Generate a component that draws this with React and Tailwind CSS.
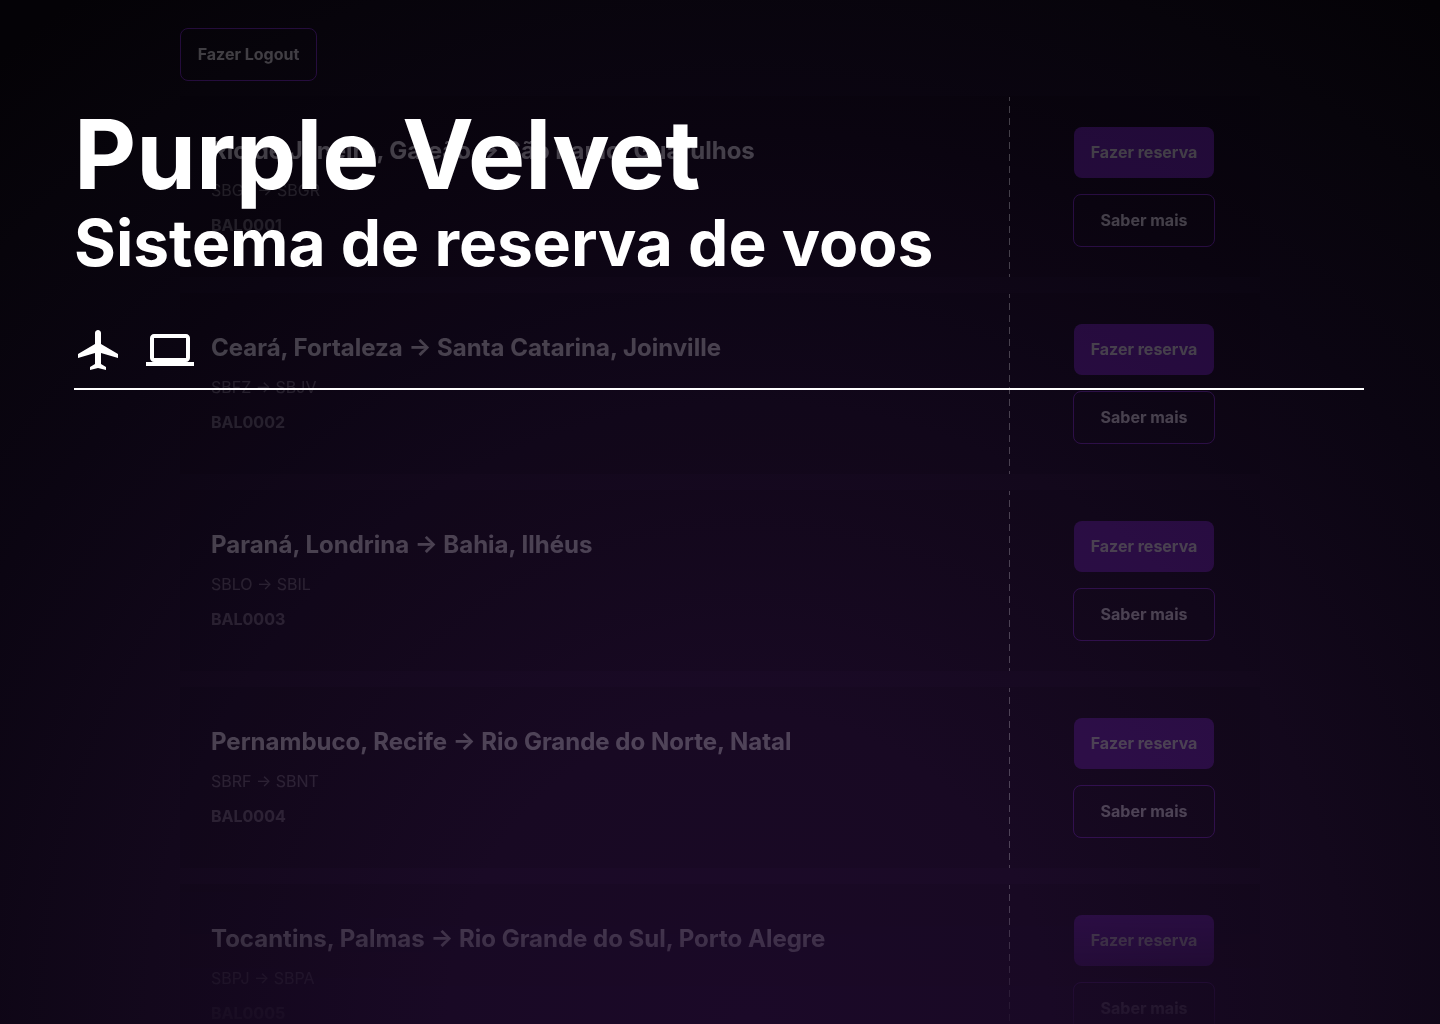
const flights = [
  { route: "Rio de Janeiro, Galeão → São Paulo, Guarulhos", airports: "SBGL → SBGR", code: "BAL0001" },
  { route: "Ceará, Fortaleza → Santa Catarina, Joinville", airports: "SBFZ → SBJV", code: "BAL0002" },
  { route: "Paraná, Londrina → Bahia, Ilhéus", airports: "SBLO → SBIL", code: "BAL0003" },
  { route: "Pernambuco, Recife → Rio Grande do Norte, Natal", airports: "SBRF → SBNT", code: "BAL0004" },
  { route: "Tocantins, Palmas → Rio Grande do Sul, Porto Alegre", airports: "SBPJ → SBPA", code: "BAL0005" },
];

function OutlineButton({ children, className = "" }) {
  return (
    <button
      type="button"
      className={`rounded-lg border border-[#8a2be2] py-4 text-base leading-[19px] font-bold ${className}`}
    >
      {children}
    </button>
  );
}

function FlightCard({ flight }) {
  return (
    <article className="flex bg-black/30 pl-[31px]">
      <div className="flex flex-1 flex-col justify-center gap-4 pb-0.5">
        <h3 className="text-2xl leading-[29px] font-bold">{flight.route}</h3>
        <p className="text-base leading-[19px] text-white/45">{flight.airports}</p>
        <p className="text-base leading-[19px] font-bold text-white/45">{flight.code}</p>
      </div>
      <div className="mt-px w-px bg-[repeating-linear-gradient(to_bottom,white_0_4px,transparent_4px_9px,white_9px_12px)]" />
      <div className="flex flex-col items-center gap-4 pt-[31px] pr-[45px] pb-[30px] pl-[63px]">
        <button
          type="button"
          className="w-[140px] rounded-lg bg-[#761fc4] py-4 text-base leading-[19px] font-bold"
        >
          Fazer reserva
        </button>
        <OutlineButton className="w-[142px]">Saber mais</OutlineButton>
      </div>
    </article>
  );
}

function PlaneIcon() {
  return (
    <svg viewBox="0 0 24 24" className="size-12" fill="currentColor" aria-hidden="true">
      <path d="M22 16v-2l-8.5-5V3.5c0-.83-.67-1.5-1.5-1.5s-1.5.67-1.5 1.5V9L2 14v2l8.5-2.5V19L8 20.5V22l4-1 4 1v-1.5L13.5 19v-5.5L22 16z" />
    </svg>
  );
}

function LaptopIcon() {
  return (
    <svg viewBox="0 0 24 24" className="size-12" fill="currentColor" aria-hidden="true">
      <path d="M20 18c1.1 0 1.99-.9 1.99-2L22 6c0-1.1-.9-2-2-2H4c-1.1 0-2 .9-2 2v10c0 1.1.9 2 2 2H0v2h24v-2h-4zM4 6h16v10H4V6z" />
    </svg>
  );
}

export default function App() {
  return (
    <div className="relative h-screen overflow-hidden bg-[#030205] bg-[radial-gradient(1200px_1240px_at_52%_100%,#1c0a29_0%,#1a0a26_25%,#13081c_50%,#0b0512_72%,#07040b_88%,#040206_100%)] font-['Inter',sans-serif] text-white">
      <div className="absolute inset-0 overflow-hidden opacity-[0.23] mask-[linear-gradient(to_bottom,black_87%,transparent_102%)]">
        <div className="mx-auto flex max-w-[1080px] flex-col gap-4 pt-7">
          <OutlineButton className="-mb-px w-[137px] self-start">Fazer Logout</OutlineButton>
          {flights.map((flight) => (
            <FlightCard key={flight.code} flight={flight} />
          ))}
        </div>
      </div>
      <header className="relative pt-[106px] pr-[76px] pl-[74px]">
        <h1 className="text-8xl leading-none font-bold">Purple Velvet</h1>
        <h2 className="text-[64px] leading-[82px] font-bold">Sistema de reserva de voos</h2>
        <div className="mt-[42px] flex gap-6 border-b-2 border-white pb-[14px]">
          <PlaneIcon />
          <LaptopIcon />
        </div>
      </header>
    </div>
  );
}
